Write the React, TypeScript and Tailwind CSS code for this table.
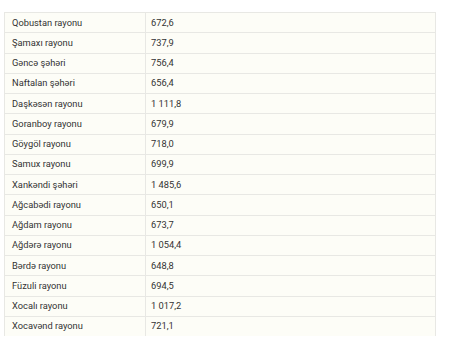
const rows: [string, string][] = [
  ['Qobustan rayonu', '672,6'],
  ['Şamaxı rayonu', '737,9'],
  ['Gəncə şəhəri', '756,4'],
  ['Naftalan şəhəri', '656,4'],
  ['Daşkəsən rayonu', '1 111,8'],
  ['Goranboy rayonu', '679,9'],
  ['Göygöl rayonu', '718,0'],
  ['Samux rayonu', '699,9'],
  ['Xankəndi şəhəri', '1 485,6'],
  ['Ağcabədi rayonu', '650,1'],
  ['Ağdam rayonu', '673,7'],
  ['Ağdərə rayonu', '1 054,4'],
  ['Bərdə rayonu', '648,8'],
  ['Füzuli rayonu', '694,5'],
  ['Xocalı rayonu', '1 017,2'],
  ['Xocavənd rayonu', '721,1'],
];

export default function App() {
  return (
    <div className="w-[449px] h-[347px] bg-white overflow-hidden pt-[12px] pl-[4px]">
      <div className="w-[432px] h-[324px] overflow-hidden border-l border-r border-[#e8e8e4] bg-[#fdfdf7]">
        {rows.map(([name, value]) => (
          <div key={name} className="flex h-[20.25px] border-t border-[#e8e8e4] text-[9.3px] text-[#333] font-['Roboto',sans-serif]">
            <div className="w-[141px] shrink-0 border-r border-[#e8e8e4] pl-[7px] flex items-center">{name}</div>
            <div className="pl-[5px] flex items-center">{value}</div>
          </div>
        ))}
      </div>
    </div>
  );
}
